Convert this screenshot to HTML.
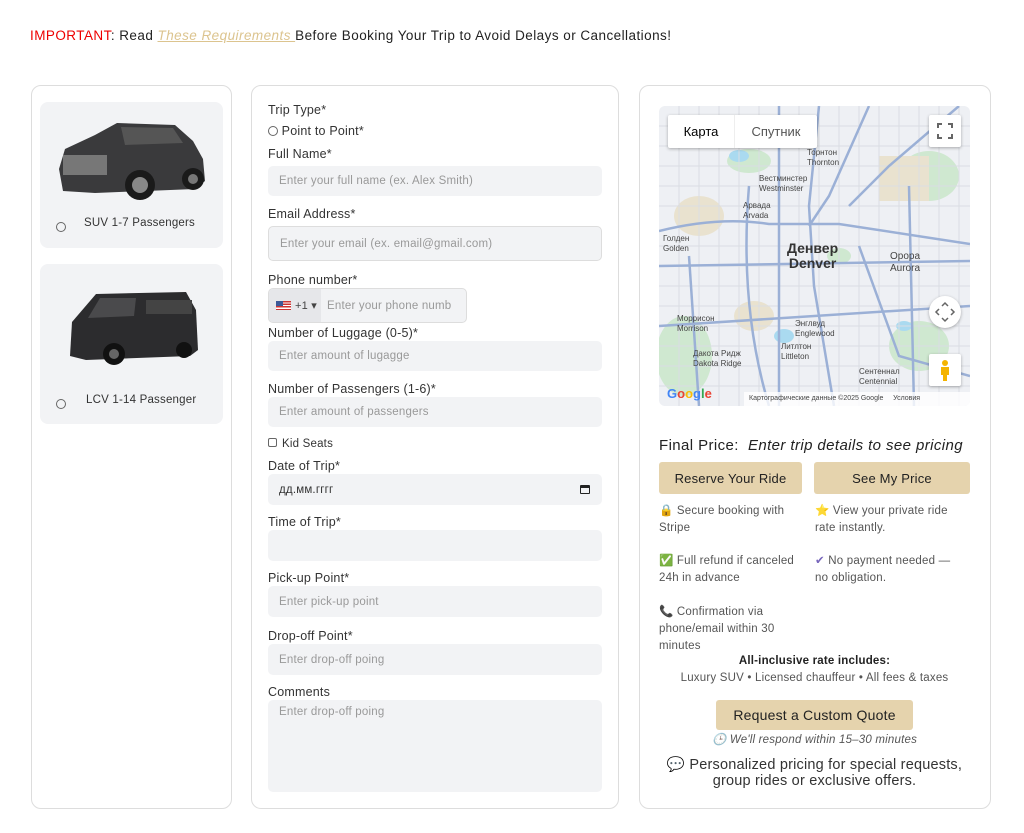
<!DOCTYPE html>
<html><head><meta charset="utf-8"><style>
*{box-sizing:border-box;margin:0;padding:0}
body{width:1024px;height:833px;background:#fff;font-family:"Liberation Sans",sans-serif;color:#222;position:relative;overflow:hidden;letter-spacing:0.2px}
.abs{position:absolute}
.card{position:absolute;border:1px solid #ddd;border-radius:10px;background:#fff}
.tile{position:absolute;left:40px;width:183px;background:#f2f3f5;border-radius:8px}
.lbl{position:absolute;left:268px;font-size:12.5px;color:#333}
.inp{position:absolute;left:268px;width:334px;background:#f2f3f5;border-radius:5px;font-size:11.5px;color:#999;padding-left:11px;display:flex;align-items:center}
.btn{position:absolute;background:#e5d3ad;border-radius:3px;font-size:13px;color:#222;display:flex;align-items:center;justify-content:center}
.t{position:absolute;font-size:11.5px;color:#555;line-height:17px}
.radio{display:inline-block;width:10px;height:10px;border:1px solid #666;border-radius:50%;vertical-align:-1px}
</style></head><body>
<div class="abs" style="left:30px;top:28px;font-size:13.5px;color:#222;letter-spacing:0.45px;white-space:nowrap"><span style="color:#e00">IMPORTANT</span>: Read <span style="color:#dcc48f;font-style:italic;text-decoration:underline">These Requirements </span>Before Booking Your Trip to Avoid Delays or Cancellations!</div>

<div class="card" style="left:31px;top:85px;width:201px;height:724px"></div>
<div class="tile" style="top:102px;height:146px">
<svg class="abs" style="left:15px;top:17px" width="152" height="82" viewBox="0 0 152 82">
<path d="M10 30 L40 16 L62 4 L120 6 L138 22 L148 40 L150 62 L140 70 L40 74 L8 72 L4 50 Z" fill="#3a3a3c"/>
<path d="M66 8 L118 9 L128 24 L70 26 Z" fill="#555"/>
<rect x="8" y="36" width="44" height="20" fill="#777"/>
<circle cx="85" cy="66" r="15" fill="#1a1a1a"/><circle cx="85" cy="66" r="8" fill="#888"/>
<circle cx="138" cy="60" r="11" fill="#1a1a1a"/><circle cx="138" cy="60" r="5" fill="#777"/>
</svg>
<div class="abs" style="left:16px;top:116px"><span class="radio"></span></div>
<div class="abs" style="left:44px;top:115px;font-size:11.5px;color:#333">SUV 1-7 Passengers</div>
</div>
<div class="tile" style="top:264px;height:160px">
<svg class="abs" style="left:26px;top:26px" width="134" height="78" viewBox="0 0 134 78">
<path d="M6 32 L30 4 L120 2 L130 20 L132 60 L124 66 L20 70 L4 66 Z" fill="#2c2c2e"/>
<path d="M34 8 L70 8 L68 26 L22 28 Z" fill="#4a4a4c"/>
<rect x="80" y="10" width="46" height="14" fill="#444"/>
<circle cx="48" cy="64" r="11" fill="#111"/><circle cx="48" cy="64" r="5" fill="#666"/>
<circle cx="118" cy="60" r="8" fill="#111"/>
</svg>
<div class="abs" style="left:16px;top:131px"><span class="radio"></span></div>
<div class="abs" style="left:46px;top:130px;font-size:11.5px;color:#333">LCV 1-14 Passenger</div>
</div>

<div class="card" style="left:251px;top:85px;width:368px;height:724px"></div>
<div class="lbl" style="top:103px">Trip Type*</div>
<div class="lbl" style="top:124px"><span class="radio"></span> Point to Point*</div>
<div class="lbl" style="top:147px">Full Name*</div>
<div class="inp" style="top:166px;height:30px">Enter your full name (ex. Alex Smith)</div>
<div class="lbl" style="top:207px">Email Address*</div>
<div class="inp" style="top:226px;height:35px;border:1px solid #ddd">Enter your email (ex. email@gmail.com)</div>
<div class="lbl" style="top:273px">Phone number*</div>
<div class="inp" style="top:288px;height:35px;width:199px;border:1px solid #ddd;padding:0;overflow:hidden"><div style="width:52px;height:100%;background:#e6e7ea;display:flex;align-items:center;padding-left:7px;color:#444;font-size:11px"><span style="display:inline-block;width:15px;height:9px;background:repeating-linear-gradient(#c33 0 1.3px,#fff 1.3px 2.6px);position:relative;margin-right:4px"><span style="position:absolute;left:0;top:0;width:7px;height:5px;background:#3b5998"></span></span>+1 ▾</div><span style="padding-left:6px;white-space:nowrap">Enter your phone numb</span></div>
<div class="lbl" style="top:326px">Number of Luggage (0-5)*</div>
<div class="inp" style="top:341px;height:30px">Enter amount of lugagge</div>
<div class="lbl" style="top:382px">Number of Passengers (1-6)*</div>
<div class="inp" style="top:397px;height:30px">Enter amount of passengers</div>
<div class="lbl" style="top:438px;font-size:11.5px"><span style="display:inline-block;width:9px;height:9px;border:1px solid #666;border-radius:2px;margin-right:5px"></span>Kid Seats</div>
<div class="lbl" style="top:459px">Date of Trip*</div>
<div class="inp" style="top:474px;height:31px;color:#333">дд.мм.гггг<span style="position:absolute;right:12px;width:10px;height:9px;border:1.5px solid #222;border-top-width:3px;border-radius:1px"></span></div>
<div class="lbl" style="top:515px">Time of Trip*</div>
<div class="inp" style="top:530px;height:31px"></div>
<div class="lbl" style="top:571px">Pick-up Point*</div>
<div class="inp" style="top:586px;height:31px">Enter pick-up point</div>
<div class="lbl" style="top:629px">Drop-off Point*</div>
<div class="inp" style="top:644px;height:31px">Enter drop-off poing</div>
<div class="lbl" style="top:685px">Comments</div>
<div class="inp" style="top:700px;height:92px;align-items:flex-start;padding-top:6px">Enter drop-off poing</div>

<div class="card" style="left:639px;top:85px;width:352px;height:724px"></div>
<div class="abs" style="left:659px;top:106px;width:311px;height:300px;border-radius:6px;overflow:hidden;background:#eef0f4;letter-spacing:0">
<svg width="311" height="300" viewBox="0 0 311 300" style="position:absolute;left:0;top:0">
<g fill="#cfe8d0"><ellipse cx="90" cy="55" rx="22" ry="12"/><ellipse cx="270" cy="70" rx="30" ry="25"/><ellipse cx="25" cy="250" rx="28" ry="40"/><ellipse cx="260" cy="240" rx="30" ry="25"/><ellipse cx="180" cy="150" rx="12" ry="8"/></g>
<g fill="#e9e2cf"><rect x="220" y="50" width="50" height="45"/><ellipse cx="40" cy="110" rx="25" ry="20"/><ellipse cx="95" cy="210" rx="20" ry="15"/></g>
<g fill="#aadaf0"><ellipse cx="80" cy="50" rx="10" ry="6"/><ellipse cx="125" cy="230" rx="10" ry="7"/><ellipse cx="245" cy="220" rx="8" ry="5"/></g>
<g stroke="#dadde3" stroke-width="1">
<path d="M0 20H311M0 40H311M0 60H311M0 80H311M0 100H311M0 140H311M0 160H311M0 180H311M0 200H311M0 220H311M0 240H311M0 260H311M0 280H311"/>
<path d="M20 0V300M40 0V300M60 0V300M80 0V300M100 0V300M120 0V300M140 0V300M160 0V300M180 0V300M200 0V300M220 0V300M240 0V300M260 0V300M280 0V300M300 0V300"/>
</g>
<g stroke="#9bb0d6" stroke-width="2.5" fill="none">
<path d="M0 125 Q60 110 110 118 L180 118 L311 138"/>
<path d="M0 160 L311 155"/>
<path d="M160 0 L150 100 L155 180 L175 300"/>
<path d="M210 0 L170 90 L150 120"/>
<path d="M300 0 L230 60 L190 100"/>
<path d="M90 80 Q80 200 110 300"/>
<path d="M30 150 L40 300"/>
<path d="M0 220 L311 200"/>
<path d="M250 80 L255 300"/>
<path d="M120 0 L120 300"/>
<path d="M200 140 L240 250 L311 270"/>
</g>
</svg>
<div class="abs" style="left:9px;top:9px;width:149px;height:33px;background:#fff;box-shadow:0 1px 3px rgba(0,0,0,.3);border-radius:2px;font-size:13px;display:flex"><div style="width:66px;display:flex;align-items:center;justify-content:center;color:#000">Карта</div><div style="flex:1;display:flex;align-items:center;justify-content:center;color:#555;border-left:1px solid #eee">Спутник</div></div>
<div class="abs" style="left:270px;top:9px;width:32px;height:32px;background:#fff;box-shadow:0 1px 3px rgba(0,0,0,.3);border-radius:2px"><svg width="32" height="32"><path d="M9 13V9H13M19 9H23V13M23 19V23H19M13 23H9V19" stroke="#666" stroke-width="2" fill="none"/></svg></div>
<div class="abs" style="left:270px;top:190px;width:32px;height:32px;background:#fff;border-radius:50%;box-shadow:0 1px 3px rgba(0,0,0,.3)"><svg width="32" height="32"><path d="M13 10L16 7L19 10M13 22L16 25L19 22M10 13L7 16L10 19M22 13L25 16L22 19" stroke="#666" stroke-width="1.5" fill="none"/></svg></div>
<div class="abs" style="left:270px;top:248px;width:32px;height:32px;background:#fff;border-radius:2px;box-shadow:0 1px 3px rgba(0,0,0,.3)"><svg width="32" height="32"><circle cx="16" cy="9" r="3" fill="#f4b400"/><path d="M12 13H20V21H18V27H14V21H12Z" fill="#f4b400"/></svg></div>
<div class="abs" style="left:128px;top:135px;font-size:14px;font-weight:bold;color:#333;line-height:15px;text-align:center">Денвер<br>Denver</div>
<div class="abs" style="left:231px;top:145px;font-size:10px;color:#444;line-height:12px">Орора<br>Aurora</div>
<div class="abs" style="left:100px;top:68px;font-size:8px;color:#444;line-height:10px">Вестминстер<br>Westminster</div>
<div class="abs" style="left:84px;top:95px;font-size:8px;color:#444;line-height:10px">Арвада<br>Arvada</div>
<div class="abs" style="left:4px;top:128px;font-size:8px;color:#444;line-height:10px">Голден<br>Golden</div>
<div class="abs" style="left:18px;top:208px;font-size:8px;color:#444;line-height:10px">Моррисон<br>Morrison</div>
<div class="abs" style="left:136px;top:213px;font-size:8px;color:#444;line-height:10px">Энглвуд<br>Englewood</div>
<div class="abs" style="left:122px;top:236px;font-size:8px;color:#444;line-height:10px">Литлтон<br>Littleton</div>
<div class="abs" style="left:34px;top:243px;font-size:8px;color:#444;line-height:10px">Дакота Ридж<br>Dakota Ridge</div>
<div class="abs" style="left:200px;top:261px;font-size:8px;color:#444;line-height:10px">Сентеннал<br>Centennial</div>
<div class="abs" style="left:148px;top:42px;font-size:8px;color:#444;line-height:10px">Торнтон<br>Thornton</div>
<div class="abs" style="left:8px;top:280px;font-size:13px;font-weight:bold"><span style="color:#4285f4">G</span><span style="color:#ea4335">o</span><span style="color:#fbbc05">o</span><span style="color:#4285f4">g</span><span style="color:#34a853">l</span><span style="color:#ea4335">e</span></div>
<div class="abs" style="left:85px;top:286px;width:226px;height:14px;background:rgba(255,255,255,.8);font-size:7px;color:#444;padding-left:5px;line-height:14px;white-space:nowrap">Картографические данные ©2025 Google &nbsp;&nbsp;&nbsp; Условия</div>
</div>

<div class="abs" style="left:659px;top:437px;font-size:15px;color:#222;letter-spacing:0.4px;white-space:nowrap">Final Price: &nbsp;<i>Enter trip details to see pricing</i></div>
<div class="btn" style="left:659px;top:462px;width:143px;height:32px">Reserve Your Ride</div>
<div class="btn" style="left:814px;top:462px;width:156px;height:32px">See My Price</div>
<div class="t" style="left:659px;top:503px;width:145px">🔒 Secure booking with Stripe</div>
<div class="t" style="left:815px;top:503px;width:150px">⭐ View your private ride rate instantly.</div>
<div class="t" style="left:659px;top:553px;width:150px"><span style="color:#3c3">✅</span> Full refund if canceled 24h in advance</div>
<div class="t" style="left:815px;top:553px;width:150px"><span style="color:#76b">✔</span> No payment needed — no obligation.</div>
<div class="t" style="left:659px;top:604px;width:140px">📞 Confirmation via phone/email within 30 minutes</div>
<div class="t" style="left:659px;top:653px;width:311px;text-align:center;font-weight:bold;color:#222">All-inclusive rate includes:</div>
<div class="t" style="left:659px;top:670px;width:311px;text-align:center">Luxury SUV • Licensed chauffeur • All fees &amp; taxes</div>
<div class="btn" style="left:716px;top:700px;width:197px;height:30px;font-size:14px">Request a Custom Quote</div>
<div class="t" style="left:659px;top:732px;width:311px;text-align:center;font-style:italic">🕒 We'll respond within 15–30 minutes</div>
<div class="abs" style="left:659px;top:757px;width:311px;text-align:center;font-size:14.5px;color:#333;line-height:16px">💬 Personalized pricing for special requests, group rides or exclusive offers.</div>
</body></html>
